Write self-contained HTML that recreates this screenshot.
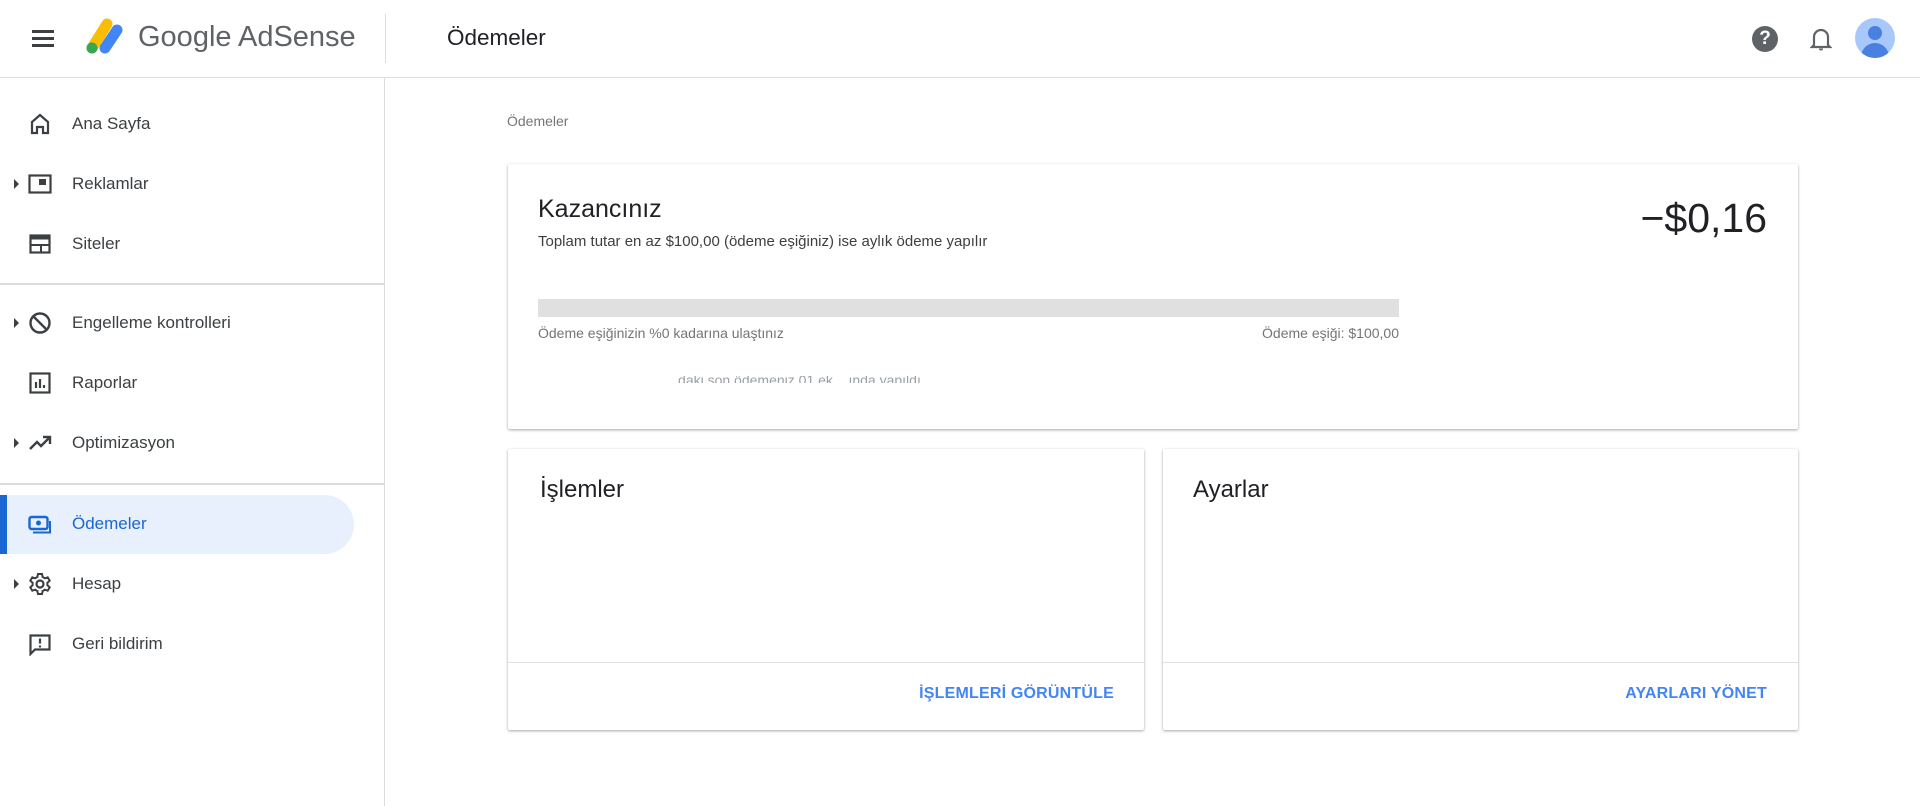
<!DOCTYPE html>
<html><head><meta charset="utf-8"><style>
*{margin:0;padding:0;box-sizing:border-box}
body{width:1920px;height:806px;background:#fff;font-family:"Liberation Sans",Arial,sans-serif;position:relative;overflow:hidden;color:#202124}
.abs{position:absolute}
.hdr{left:0;top:0;width:1920px;height:78px;border-bottom:1px solid #dadce0}
.side{left:0;top:78px;width:385px;height:728px;border-right:1px solid #dadce0}
.item{position:absolute;left:0;width:385px;height:48px;display:flex;align-items:center}
.item .ic{position:absolute;left:28px;top:12px;width:24px;height:24px}
.item .tx{position:absolute;left:72px;font-size:17px;color:#3c4043}
.item .ar{position:absolute;left:14px;top:19px;width:0;height:0;border-top:5px solid transparent;border-bottom:5px solid transparent;border-left:5px solid #3c4043}
.hr{position:absolute;left:0;width:385px;height:2px;background:#dadce0}
.card{background:#fff;box-shadow:0 1px 3px rgba(0,0,0,.25),0 1px 2px rgba(0,0,0,.12);border-radius:2px}
.gray{color:#757575}
.btn{color:#4285f4;font-size:16px;font-weight:bold;letter-spacing:.2px}
</style></head><body>
<div class="abs hdr">
  <div class="abs" style="left:32px;top:30px;width:22px;height:3px;background:#3c4043"></div>
  <div class="abs" style="left:32px;top:37px;width:22px;height:3px;background:#3c4043"></div>
  <div class="abs" style="left:32px;top:44px;width:22px;height:3px;background:#3c4043"></div>
  <svg class="abs" style="left:80px;top:16px" width="44" height="40" viewBox="0 0 44 40">
    <line x1="12" y1="32" x2="27" y2="8" stroke="#fbbc04" stroke-width="11" stroke-linecap="round"/>
    <line x1="25" y1="32" x2="37" y2="14" stroke="#4285f4" stroke-width="11" stroke-linecap="round"/>
    <circle cx="12" cy="32" r="5.5" fill="#34a853"/>
  </svg>
  <div class="abs" style="left:138px;top:21px;font-size:29px;color:#5f6368">Google AdSense</div>
  <div class="abs" style="left:385px;top:14px;width:1px;height:49px;background:#dadce0"></div>
  <div class="abs" style="left:447px;top:25px;font-size:22.5px;color:#202124">Ödemeler</div>
  <div class="abs" style="left:1752px;top:26px;width:26px;height:26px;border-radius:50%;background:#5f6368;color:#fff;font-weight:bold;font-size:19px;text-align:center;line-height:26px">?</div>
  <svg class="abs" style="left:1810px;top:26px" width="22" height="26" viewBox="0 0 22 26"><path d="M4 19V11a7 7 0 0 1 14 0v8l2 2H2z" fill="none" stroke="#5f6368" stroke-width="2.2"/><path d="M9 22.5a2 2 0 0 0 4 0" fill="#5f6368"/></svg>
  <div class="abs" style="left:1855px;top:18px;width:40px;height:40px;border-radius:50%;background:#a8c7fa;overflow:hidden">
    <div class="abs" style="left:13px;top:8px;width:14px;height:14px;border-radius:50%;background:#4a80e0"></div>
    <div class="abs" style="left:6px;top:25px;width:28px;height:20px;border-radius:14px 14px 0 0;background:#4a80e0"></div>
  </div>
</div>
<div class="abs side">
  <div class="item" style="top:22px"><svg class="ic" viewBox="0 0 24 24"><path d="M4 21V10l8-7 8 7v11h-5v-6H9v6z" fill="none" stroke="#3c4043" stroke-width="2.2"/></svg><span class="tx">Ana Sayfa</span></div>
  <div class="item" style="top:82px"><span class="ar"></span><svg class="ic" viewBox="0 0 24 24"><rect x="1.5" y="3.5" width="21" height="17" fill="none" stroke="#3c4043" stroke-width="2.2"/><rect x="11" y="7" width="7" height="6" fill="#3c4043"/></svg><span class="tx">Reklamlar</span></div>
  <div class="item" style="top:142px"><svg class="ic" viewBox="0 0 24 24"><rect x="2.5" y="3.5" width="19" height="17" fill="none" stroke="#3c4043" stroke-width="2.2"/><rect x="2.5" y="3.5" width="19" height="4" fill="#3c4043"/><path d="M2.5 13h19M13 13v7" stroke="#3c4043" stroke-width="2"/></svg><span class="tx">Siteler</span></div>
  <div class="hr" style="top:205px"></div>
  <div class="item" style="top:221px"><span class="ar"></span><svg class="ic" viewBox="0 0 24 24"><circle cx="12" cy="12" r="9.5" fill="none" stroke="#3c4043" stroke-width="2.4"/><path d="M5.5 5.5l13 13" stroke="#3c4043" stroke-width="2.4"/></svg><span class="tx">Engelleme kontrolleri</span></div>
  <div class="item" style="top:281px"><svg class="ic" viewBox="0 0 24 24"><rect x="2.5" y="2.5" width="19" height="19" fill="none" stroke="#3c4043" stroke-width="2.2"/><path d="M8 17v-6M12 17V8M16 17v-3" stroke="#3c4043" stroke-width="2.2"/></svg><span class="tx">Raporlar</span></div>
  <div class="item" style="top:341px"><span class="ar"></span><svg class="ic" viewBox="0 0 24 24"><path d="M2 18l7-7 4 4 8-8M15 6h7v7" fill="none" stroke="#3c4043" stroke-width="2.4"/></svg><span class="tx">Optimizasyon</span></div>
  <div class="hr" style="top:405px"></div>
  <div class="abs" style="left:0;top:417px;width:354px;height:59px;background:#e8f0fe;border-radius:0 30px 30px 0"></div>
  <div class="abs" style="left:0;top:417px;width:7px;height:59px;background:#1967d2"></div>
  <div class="item" style="top:422px"><svg class="ic" viewBox="0 0 24 24"><rect x="1.5" y="5" width="18" height="12" rx="2" fill="none" stroke="#1967d2" stroke-width="2.4"/><circle cx="10.5" cy="11" r="2.5" fill="#1967d2"/><path d="M5 20.5h17V9" fill="none" stroke="#1967d2" stroke-width="2"/></svg><span class="tx" style="color:#1967d2">Ödemeler</span></div>
  <div class="item" style="top:482px"><span class="ar"></span><svg class="ic" viewBox="0 0 24 24"><circle cx="12" cy="12" r="3.5" fill="none" stroke="#3c4043" stroke-width="2.2"/><path d="M10 2h4l.6 3 2.3 1.3 2.8-1 2 3.4-2.3 2v2.6l2.3 2-2 3.4-2.8-1-2.3 1.3-.6 3h-4l-.6-3-2.3-1.3-2.8 1-2-3.4 2.3-2v-2.6l-2.3-2 2-3.4 2.8 1L9.4 5z" fill="none" stroke="#3c4043" stroke-width="2"/></svg><span class="tx">Hesap</span></div>
  <div class="item" style="top:542px"><svg class="ic" viewBox="0 0 24 24"><path d="M2.5 22V3.5h19v14H7z" fill="none" stroke="#3c4043" stroke-width="2.2"/><path d="M12 6.5v5M12 13.5v2" stroke="#3c4043" stroke-width="2.2"/></svg><span class="tx">Geri bildirim</span></div>
</div>
<div class="abs gray" style="left:507px;top:113px;font-size:14px">Ödemeler</div>
<div class="abs card" style="left:508px;top:164px;width:1290px;height:265px">
  <div class="abs" style="left:30px;top:31px;font-size:25px;color:#202124">Kazancınız</div>
  <div class="abs" style="left:30px;top:69px;font-size:15px;color:#3c4043">Toplam tutar en az $100,00 (ödeme eşiğiniz) ise aylık ödeme yapılır</div>
  <div class="abs" style="right:31px;top:31px;font-size:41px;color:#202124">−$0,16</div>
  <div class="abs" style="left:30px;top:135px;width:861px;height:18px;background:#e0e0e0"></div>
  <div class="abs gray" style="left:30px;top:161px;font-size:14px">Ödeme eşiğinizin %0 kadarına ulaştınız</div>
  <div class="abs gray" style="left:691px;width:200px;text-align:right;top:161px;font-size:14px">Ödeme eşiği: $100,00</div>
  <div class="abs" style="left:30px;top:212px;height:7px;overflow:hidden;font-size:14px;color:#9aa0a6;line-height:14px"><div style="margin-top:-3px">&nbsp;&nbsp;&nbsp;&nbsp;&nbsp;&nbsp;&nbsp;&nbsp;&nbsp;&nbsp;&nbsp;&nbsp;&nbsp;&nbsp;&nbsp;&nbsp;&nbsp;&nbsp;&nbsp;&nbsp;&nbsp;&nbsp;&nbsp;&nbsp;&nbsp;&nbsp;&nbsp;&nbsp;&nbsp;&nbsp;&nbsp;&nbsp;&nbsp;&nbsp;&nbsp;&nbsp;daki son ödemeniz 01 ek... ında yapıldı</div></div>
</div>
<div class="abs card" style="left:508px;top:449px;width:636px;height:281px">
  <div class="abs" style="left:32px;top:27px;font-size:24px">İşlemler</div>
  <div class="abs" style="left:0;top:213px;width:636px;height:1px;background:#e0e0e0"></div>
  <div class="abs btn" style="right:30px;top:236px">İŞLEMLERİ GÖRÜNTÜLE</div>
</div>
<div class="abs card" style="left:1163px;top:449px;width:635px;height:281px">
  <div class="abs" style="left:30px;top:27px;font-size:24px">Ayarlar</div>
  <div class="abs" style="left:0;top:213px;width:635px;height:1px;background:#e0e0e0"></div>
  <div class="abs btn" style="right:31px;top:236px">AYARLARI YÖNET</div>
</div>
</body></html>
